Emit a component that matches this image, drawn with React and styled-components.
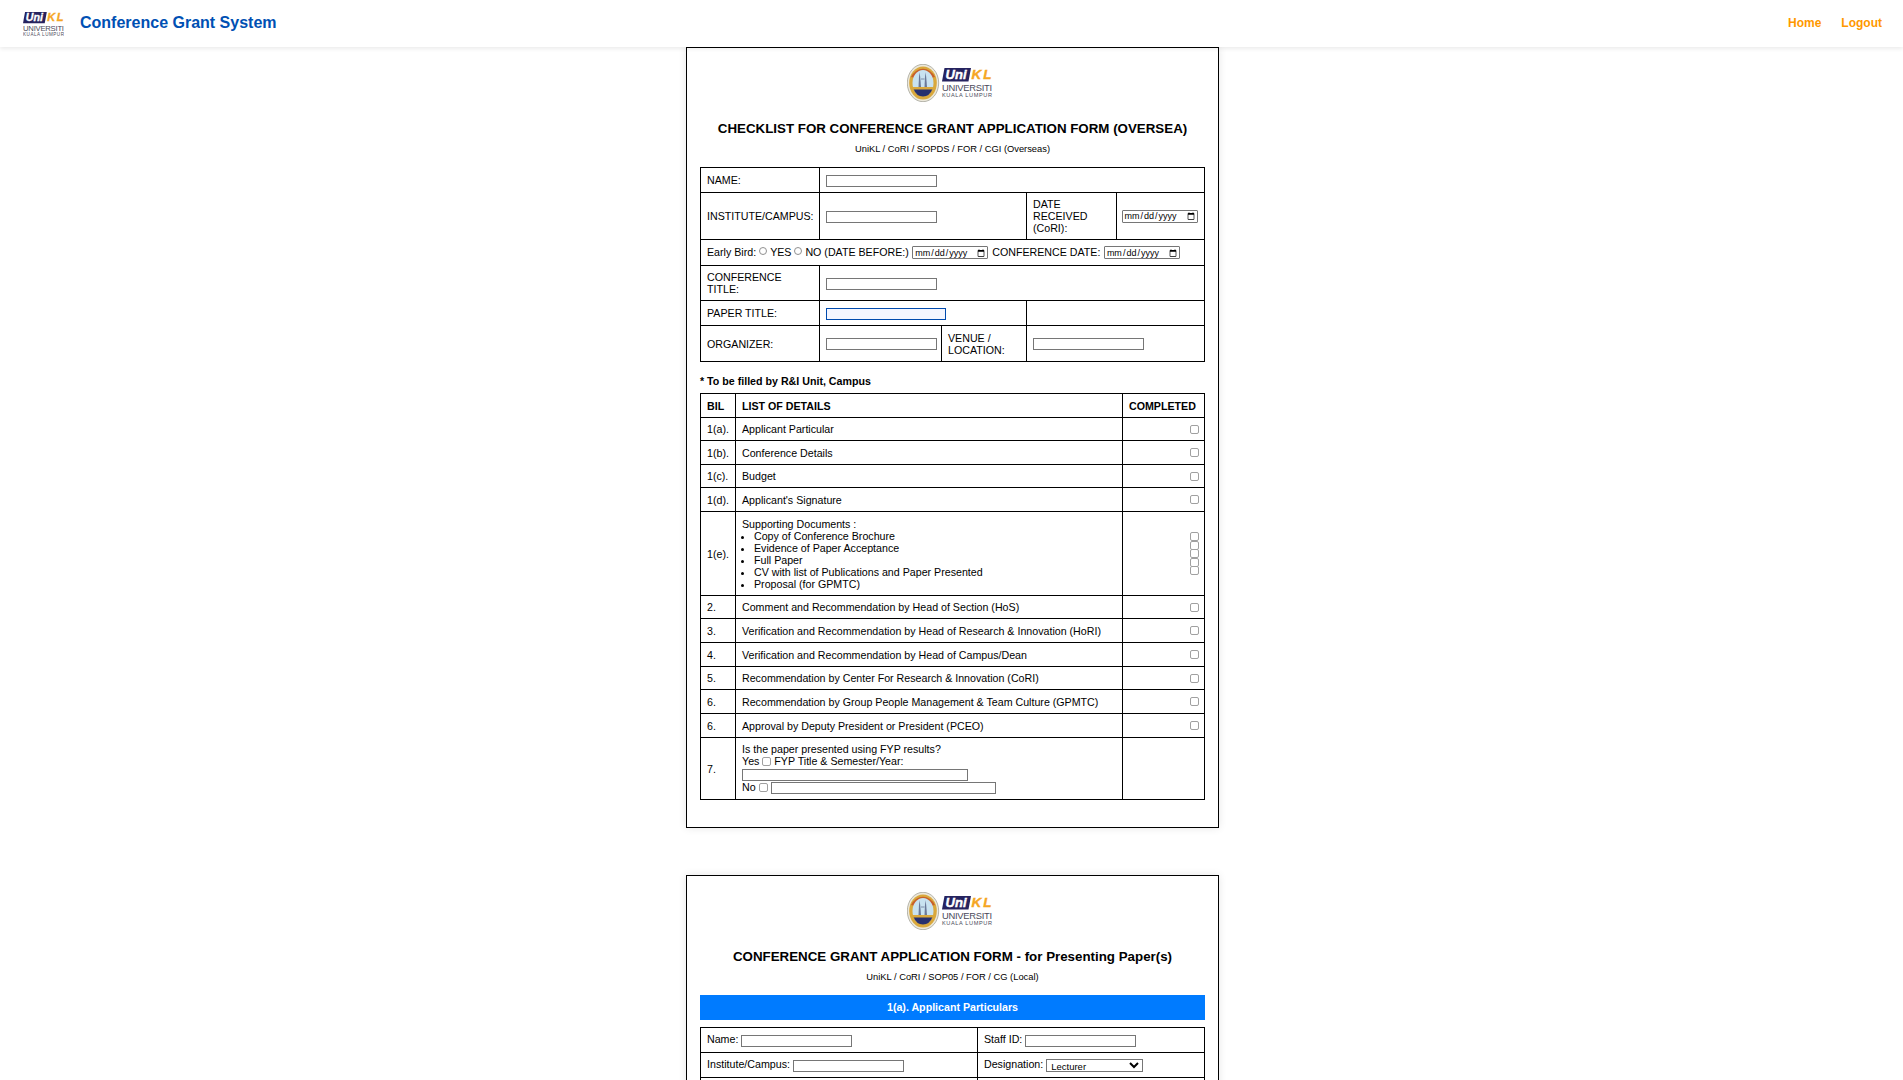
import React from "react";
import styled, { createGlobalStyle } from "styled-components";

const GlobalStyle = createGlobalStyle`
    html, body {
        margin: 0;
        height: 1080px;
        overflow: hidden;
        background: #fff;
    }
    body {
        font-family: "Liberation Sans", Arial, sans-serif;
        color: #000;
    }
`;

const Header = styled.header`
    position: relative;
    z-index: 2;
    display: flex;
    align-items: center;
    box-sizing: border-box;
    height: 47px;
    padding: 0 21px 2px 23px;
    background: #fff;
    box-shadow: 0 2px 4px rgba(0, 0, 0, 0.08);
`;

const Brand = styled.div`
    display: flex;
    align-items: center;
    gap: 16px;
    flex: 1;
`;

const BrandLogo = styled.svg`
    margin-top: 3px;
`;

const BrandTitle = styled.span`
    font-size: 16px;
    font-weight: bold;
    color: #0050b3;
`;

const NavLink = styled.a`
    margin-left: 20px;
    font-size: 12px;
    font-weight: bold;
    color: #ff9800;
    text-decoration: none;
`;

const Main = styled.main`
    display: flex;
    flex-direction: column;
    align-items: center;
    gap: 47px;
    padding-left: 2px;
`;

const Card = styled.section`
    box-sizing: border-box;
    width: 533px;
    padding: 16px 13px 27px;
    background: #fff;
    border: 1px solid #000;
    box-shadow: 0 0 8px rgba(0, 0, 0, 0.1);
`;

const LogoWrap = styled.div`
    display: flex;
    justify-content: center;
    height: 38px;
`;

const Heading = styled.h2`
    margin: 19px 0 0;
    font-size: 10pt;
    line-height: 16px;
    font-weight: bold;
    text-align: center;
`;

const SubHeading = styled.p`
    margin: 6px 0 12px;
    font-size: 7pt;
    line-height: 12px;
    text-align: center;
`;

const Table = styled.table`
    width: 504px;
    border-collapse: collapse;
    table-layout: fixed;
    font-size: 8pt;
    line-height: 12px;
`;

const Row = styled.tr`
    height: ${(p) => p.$h}px;
`;

const Cell = styled.td`
    box-sizing: border-box;
    padding: 5px 5px 5px 6px;
    border: 1px solid #000;
    font-weight: ${(p) => (p.$bold ? "bold" : "normal")};
    text-align: ${(p) => (p.$right ? "right" : "left")};
`;

const TextInput = styled.input`
    box-sizing: border-box;
    width: ${(p) => p.$w || 111}px;
    height: 12px;
    margin: 0;
    padding: 0 2px;
    font-size: 9px;
    vertical-align: middle;
    background: ${(p) => (p.$focused ? "#f4f6ff" : "#fff")};
    border: 1px solid ${(p) => (p.$focused ? "#004aad" : "#767676")};
    outline: none;
`;

const DateInput = styled.input`
    box-sizing: border-box;
    width: 76px;
    height: 13px;
    margin: 0 1px 0 ${(p) => (p.$flush ? "-1.5px" : "0.5px")};
    padding: 0 1px;
    font-family: "Liberation Sans", Arial, sans-serif;
    font-size: 9px;
    vertical-align: middle;
    border: 1px solid #767676;
    border-radius: 1px;
    &::-webkit-calendar-picker-indicator {
        width: 8px;
        height: 8px;
        margin: 0 1px 0 0;
        padding: 0;
    }
`;

const Radio = styled.input`
    appearance: none;
    box-sizing: border-box;
    width: 8px;
    height: 8px;
    margin: 0 3px 3px 0;
    vertical-align: middle;
    border: 1px solid #909090;
    border-radius: 50%;
    background: #fff;
`;

const Check = styled.input`
    appearance: none;
    box-sizing: border-box;
    display: ${(p) => (p.$inline ? "inline-block" : "block")};
    width: 9px;
    height: 9px;
    margin: ${(p) => (p.$inline ? "0 3px 2px 0" : "0 0 0 auto")};
    vertical-align: middle;
    border: 1px solid #a0a0a0;
    border-radius: 2px;
    background: #fff;
`;

const CheckStack = styled.div`
    display: flex;
    flex-direction: column;
    & > input + input {
        margin-top: -0.5px;
    }
`;

const DocList = styled.ul`
    margin: 0;
    padding-left: 12px;
`;

const Note = styled.p`
    margin: 13px 0 6px;
    font-size: 8pt;
    line-height: 12px;
    font-weight: bold;
`;

const SectionBar = styled.div`
    width: 505px;
    height: 25px;
    margin-bottom: 7px;
    font-size: 8pt;
    line-height: 25px;
    font-weight: bold;
    text-align: center;
    color: #fff;
    background: #007bff;
`;

const Select = styled.select`
    box-sizing: border-box;
    width: 97px;
    height: 13px;
    margin: 0;
    padding: 0;
    font-family: "Liberation Sans", Arial, sans-serif;
    font-size: 9.5px;
    vertical-align: middle;
    border: 1px solid #767676;
    border-radius: 0;
    background: #fff;
`;

function Seal() {
    return (
        <g>
            <ellipse cx="16" cy="19" rx="15.7" ry="18.7" fill="#ece8da" stroke="#8b8b80" strokeWidth="0.6" />
            <ellipse cx="16" cy="19" rx="13.8" ry="16.6" fill="#d9a83c" />
            <path d="M4 13 A14 17 0 0 1 28 13 L24 14 A10 13 0 0 0 8 14 Z" fill="#c8602a" />
            <ellipse cx="16" cy="19" rx="10.5" ry="13" fill="#c8e2f0" />
            <path d="M6.5 25 L25.5 25 A10.5 13 0 0 1 6.5 25 Z" fill="#27306e" />
            <path d="M5.8 23 L26 23 L26 25.5 L5.8 25.5 Z" fill="#d9a83c" />
            <path d="M11.5 23 L12 13 L12.6 8 L13.2 13 L14 23 Z" fill="#6a7898" />
            <path d="M17.5 23 L18 13 L18.6 8 L19.2 13 L20 23 Z" fill="#6a7898" />
            <path d="M14 15 L17.5 15" stroke="#6a7898" strokeWidth="0.8" />
        </g>
    );
}

function Wordmark() {
    return (
        <g>
            <path d="M2.5 0 H29 L26.5 13.5 H0 Z" fill="#26235f" />
            <text x="3.5" y="11.2" fontFamily="Liberation Sans" fontSize="13" fontWeight="bold" fontStyle="italic" fill="#fff" stroke="#fff" strokeWidth="0.4" textLength="21">
                Uni
            </text>
            <text x="29.5" y="11.2" fontFamily="Liberation Sans" fontSize="13.5" fontWeight="bold" fontStyle="italic" fill="#f5a623" stroke="#f5a623" strokeWidth="0.4" textLength="20">
                KL
            </text>
            <text x="0" y="22.5" fontFamily="Liberation Sans" fontSize="9.4" fill="#4a4a5a" textLength="50">
                UNIVERSITI
            </text>
            <text x="0" y="29" fontFamily="Liberation Sans" fontSize="5.6" fill="#4a4a5a" textLength="50">
                KUALA LUMPUR
            </text>
        </g>
    );
}

function CardLogo() {
    return (
        <LogoWrap>
            <svg width="91" height="38" viewBox="0 0 91 38">
                <Seal />
                <g transform="translate(35 4)">
                    <Wordmark />
                </g>
            </svg>
        </LogoWrap>
    );
}

const checklist = [
    { no: "1(a).", text: "Applicant Particular", h: 23 },
    { no: "1(b).", text: "Conference Details", h: 24 },
    { no: "1(c).", text: "Budget", h: 23 },
    { no: "1(d).", text: "Applicant's Signature", h: 24 },
];

const approvals = [
    { no: "2.", text: "Comment and Recommendation by Head of Section (HoS)", h: 23 },
    { no: "3.", text: "Verification and Recommendation by Head of Research & Innovation (HoRI)", h: 24 },
    { no: "4.", text: "Verification and Recommendation by Head of Campus/Dean", h: 24 },
    { no: "5.", text: "Recommendation by Center For Research & Innovation (CoRI)", h: 23 },
    { no: "6.", text: "Recommendation by Group People Management & Team Culture (GPMTC)", h: 24 },
    { no: "6.", text: "Approval by Deputy President or President (PCEO)", h: 24 },
];

const documents = [
    "Copy of Conference Brochure",
    "Evidence of Paper Acceptance",
    "Full Paper",
    "CV with list of Publications and Paper Presented",
    "Proposal (for GPMTC)",
];

function DetailRow({ no, text, h }) {
    return (
        <Row $h={h}>
            <Cell>{no}</Cell>
            <Cell>{text}</Cell>
            <Cell $right>
                <Check type="checkbox" />
            </Cell>
        </Row>
    );
}

function ChecklistCard() {
    return (
        <Card>
            <CardLogo />
            <Heading>CHECKLIST FOR CONFERENCE GRANT APPLICATION FORM (OVERSEA)</Heading>
            <SubHeading>UniKL / CoRI / SOPDS / FOR / CGI (Overseas)</SubHeading>
            <Table>
                <colgroup>
                    <col width="119" />
                    <col width="122" />
                    <col width="85" />
                    <col width="90" />
                    <col width="88" />
                </colgroup>
                <tbody>
                    <Row $h={25}>
                        <Cell>NAME:</Cell>
                        <Cell colSpan={4}>
                            <TextInput type="text" />
                        </Cell>
                    </Row>
                    <Row $h={47}>
                        <Cell>INSTITUTE/CAMPUS:</Cell>
                        <Cell colSpan={2}>
                            <TextInput type="text" />
                        </Cell>
                        <Cell>DATE RECEIVED (CoRI):</Cell>
                        <Cell>
                            <DateInput type="date" $flush />
                        </Cell>
                    </Row>
                    <Row $h={26}>
                        <Cell colSpan={5}>
                            Early Bird: <Radio type="radio" name="early" />YES <Radio type="radio" name="early" />NO (DATE BEFORE:) <DateInput type="date" /> CONFERENCE DATE: <DateInput type="date" />
                        </Cell>
                    </Row>
                    <Row $h={35}>
                        <Cell>CONFERENCE TITLE:</Cell>
                        <Cell colSpan={4}>
                            <TextInput type="text" />
                        </Cell>
                    </Row>
                    <Row $h={25}>
                        <Cell>PAPER TITLE:</Cell>
                        <Cell colSpan={2}>
                            <TextInput type="text" $w={120} $focused />
                        </Cell>
                        <Cell colSpan={2} />
                    </Row>
                    <Row $h={36}>
                        <Cell>ORGANIZER:</Cell>
                        <Cell>
                            <TextInput type="text" />
                        </Cell>
                        <Cell>VENUE / LOCATION:</Cell>
                        <Cell colSpan={2}>
                            <TextInput type="text" />
                        </Cell>
                    </Row>
                </tbody>
            </Table>
            <Note>* To be filled by R&amp;I Unit, Campus</Note>
            <Table>
                <colgroup>
                    <col width="35" />
                    <col width="387" />
                    <col width="82" />
                </colgroup>
                <tbody>
                    <Row $h={24}>
                        <Cell $bold>BIL</Cell>
                        <Cell $bold>LIST OF DETAILS</Cell>
                        <Cell $bold>COMPLETED</Cell>
                    </Row>
                    {checklist.map((item, idx) => (
                        <DetailRow key={idx} {...item} />
                    ))}
                    <Row $h={84}>
                        <Cell>1(e).</Cell>
                        <Cell>
                            Supporting Documents :
                            <DocList>
                                {documents.map((doc) => (
                                    <li key={doc}>{doc}</li>
                                ))}
                            </DocList>
                        </Cell>
                        <Cell $right>
                            <CheckStack>
                                {documents.map((doc) => (
                                    <Check key={doc} type="checkbox" />
                                ))}
                            </CheckStack>
                        </Cell>
                    </Row>
                    {approvals.map((item, idx) => (
                        <DetailRow key={idx} {...item} />
                    ))}
                    <Row $h={61}>
                        <Cell>7.</Cell>
                        <Cell>
                            Is the paper presented using FYP results?
                            <br />
                            Yes <Check type="checkbox" $inline />FYP Title &amp; Semester/Year:
                            <br />
                            <TextInput type="text" $w={226} />
                            <br />
                            No <Check type="checkbox" $inline /><TextInput type="text" $w={225} />
                        </Cell>
                        <Cell />
                    </Row>
                </tbody>
            </Table>
        </Card>
    );
}

function ApplicationCard() {
    return (
        <Card>
            <CardLogo />
            <Heading>CONFERENCE GRANT APPLICATION FORM - for Presenting Paper(s)</Heading>
            <SubHeading>UniKL / CoRI / SOP05 / FOR / CG (Local)</SubHeading>
            <SectionBar>1(a). Applicant Particulars</SectionBar>
            <Table>
                <colgroup>
                    <col width="277" />
                    <col width="227" />
                </colgroup>
                <tbody>
                    <Row $h={25}>
                        <Cell>
                            Name: <TextInput type="text" />
                        </Cell>
                        <Cell>
                            Staff ID: <TextInput type="text" />
                        </Cell>
                    </Row>
                    <Row $h={25}>
                        <Cell>
                            Institute/Campus: <TextInput type="text" />
                        </Cell>
                        <Cell>
                            Designation:{" "}
                            <Select defaultValue="Lecturer">
                                <option>Lecturer</option>
                            </Select>
                        </Cell>
                    </Row>
                    <Row $h={25}>
                        <Cell />
                        <Cell />
                    </Row>
                </tbody>
            </Table>
        </Card>
    );
}

export default function App() {
    return (
        <>
            <GlobalStyle />
            <Header>
                <Brand>
                    <BrandLogo width="41" height="24" viewBox="0 0 50 29">
                        <Wordmark />
                    </BrandLogo>
                    <BrandTitle>Conference Grant System</BrandTitle>
                </Brand>
                <NavLink href="#">Home</NavLink>
                <NavLink href="#">Logout</NavLink>
            </Header>
            <Main>
                <ChecklistCard />
                <ApplicationCard />
            </Main>
        </>
    );
}
